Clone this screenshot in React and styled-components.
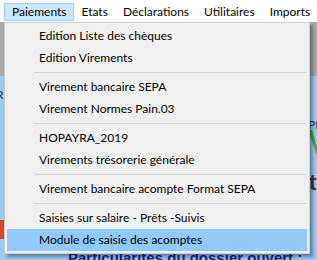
import React from "react";
import styled, { createGlobalStyle } from "styled-components";

const GlobalStyle = createGlobalStyle`
  html, body {
    margin: 0;
    padding: 0;
  }
  body {
    font-family: Lato, "Liberation Sans", sans-serif;
    background: #fff;
  }
`;

const barItems = ["Paiements", "Etats", "Déclarations", "Utilitaires", "Imports"];

const menuItems = [
  "Edition Liste des chèques",
  "Edition Virements",
  null,
  "Virement bancaire SEPA",
  "Virement Normes Pain.03",
  null,
  "HOPAYRA_2019",
  "Virements trésorerie générale",
  null,
  "Virement bancaire acompte Format SEPA",
  null,
  "Saisies sur salaire - Prêts -Suivis",
  "Module de saisie des acomptes",
];

const HOVERED = "Module de saisie des acomptes";

export default function App() {
  return (
    <>
      <GlobalStyle />
      <Screen>
        <MenuBar>
          {barItems.map((label, i) => (
            <BarItem key={label} $open={i === 0}>
              {label}
            </BarItem>
          ))}
        </MenuBar>

        <Workspace>
          <Toolbar />
          <Content>
            <LeftRail>
              <RailLetter $top={12} $color="#1d2d6b">R</RailLetter>
              <RedIcon />
              <RailLetter $top={4} $color="#6b6b6b">r</RailLetter>
            </LeftRail>
            <Center>
              <Heading>Particularités du dossier ouvert :</Heading>
            </Center>
            <RightRail>
              <SmallLabel>PI</SmallLabel>
              <svg width="12" height="34" viewBox="0 0 12 34">
                <path d="M0 0 L4 0 L12 28 L12 34 Z" fill="#3aa84a" />
              </svg>
              <BigLetter>t</BigLetter>
            </RightRail>
          </Content>
        </Workspace>

        <Dropdown>
          {menuItems.map((label, i) =>
            label === null ? (
              <Separator key={i} />
            ) : (
              <MenuItem key={label} $hover={label === HOVERED}>
                {label}
              </MenuItem>
            ),
          )}
        </Dropdown>
      </Screen>
    </>
  );
}

const Screen = styled.div`
  position: relative;
  width: 317px;
  height: 260px;
  overflow: hidden;
  display: flex;
  flex-direction: column;
  font-size: 12px;
  color: #000;
`;

const MenuBar = styled.nav`
  flex: none;
  height: 22px;
  box-sizing: border-box;
  padding: 3px 0 0 4px;
  display: flex;
  align-items: flex-start;
  background: #fff;
`;

const BarItem = styled.div`
  height: 18px;
  box-sizing: border-box;
  padding: 0 6px 1px 7px;
  display: flex;
  align-items: center;
  border: 1px solid ${(p) => (p.$open ? "#99d1ff" : "transparent")};
  background: ${(p) => (p.$open ? "#cce8ff" : "transparent")};
`;

const Workspace = styled.div`
  flex: 1;
  display: flex;
  flex-direction: column;
`;

const Toolbar = styled.div`
  flex: none;
  height: 54px;
  background: #a9a9a9;
`;

const Content = styled.div`
  flex: 1;
  display: flex;
  background: #99c9f5;
`;

const LeftRail = styled.div`
  width: 4px;
  overflow: hidden;
  display: flex;
  flex-direction: column;
`;

const RailLetter = styled.span`
  margin-left: -4px;
  margin-top: ${(p) => p.$top}px;
  font-size: 12px;
  line-height: 14px;
  color: ${(p) => p.$color};
`;

const RedIcon = styled.div`
  margin-top: 118px;
  width: 4px;
  height: 19px;
  background: #d8432b;
`;

const Center = styled.div`
  flex: 1;
  display: flex;
  flex-direction: column;
  justify-content: flex-end;
  padding-left: 64px;
`;

const Heading = styled.div`
  margin-bottom: -8px;
  font-family: "Liberation Sans", Arial, sans-serif;
  font-weight: bold;
  font-size: 15px;
  line-height: 20px;
  color: #1b2580;
  white-space: nowrap;
`;

const RightRail = styled.div`
  width: 9px;
  overflow: hidden;
  display: flex;
  flex-direction: column;
`;

const SmallLabel = styled.span`
  margin-top: 44px;
  font-size: 12px;
  line-height: 10px;
  color: #1d2d6b;
`;

const BigLetter = styled.span`
  margin-top: 8px;
  margin-left: 1px;
  font-family: "Liberation Sans", Arial, sans-serif;
  font-weight: bold;
  font-size: 22px;
  line-height: 22px;
  color: #3a3a3a;
`;

const Dropdown = styled.div`
  position: absolute;
  top: 22px;
  left: 4px;
  width: 306px;
  box-sizing: border-box;
  padding: 2px;
  border: 1px solid #cccccc;
  background: #f0f0f0;
  box-shadow: 3px 3px 3px rgba(0, 0, 0, 0.35);
`;

const MenuItem = styled.div`
  height: 22px;
  line-height: 22px;
  padding-left: 32px;
  white-space: nowrap;
  background: ${(p) => (p.$hover ? "#91c9f7" : "transparent")};
`;

const Separator = styled.div`
  height: 1px;
  margin: 3px 1px 3px 27px;
  background: #d7d7d7;
`;
